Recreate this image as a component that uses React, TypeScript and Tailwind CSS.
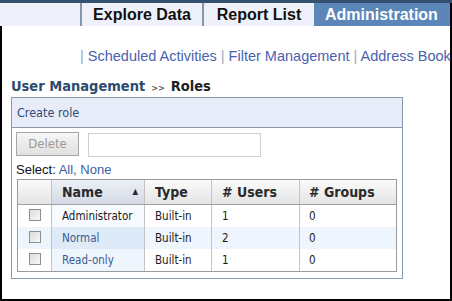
const tahoma = { fontFamily: '"DejaVu Sans Condensed", "DejaVu Sans", sans-serif' };

const rows = [
  { name: "Administrator", link: false, type: "Built-in", users: 1, groups: 0, bg: "bg-white", nameBg: "bg-[#f7fafe]" },
  { name: "Normal", link: true, type: "Built-in", users: 2, groups: 0, bg: "bg-[#eef5fd]", nameBg: "bg-[#dfeaf8]" },
  { name: "Read-only", link: true, type: "Built-in", users: 1, groups: 0, bg: "bg-white", nameBg: "bg-[#eff5fd]" },
];

function Checkbox() {
  return (
    <div className="w-[12px] h-[12px] border border-[#8f8f8f] bg-gradient-to-br from-[#dcdcdc] to-[#f8f8f8]" />
  );
}

export default function App() {
  return (
    <div className="w-[452px] h-[301px] bg-white overflow-hidden" style={{ fontFamily: '"Liberation Sans", Arial, sans-serif' }}>
      {/* top nav */}
      <div className="h-[3px] bg-[#34506f]" />
      <div className="flex h-[23px] bg-[#eef0fa] text-[16px] font-bold leading-[23px]">
        <div className="w-[82px] border-r-2 border-[#8596ad]" />
        <div className="w-[122px] text-center text-[#111] border-r-2 border-[#8596ad]">Explore Data</div>
        <div className="w-[110px] text-center text-[#111]">Report List</div>
        <div className="flex-1 bg-[#5b86b7] text-white pl-[11px] border-r-2 border-black">Administration</div>
      </div>

      <div className="h-[275px] border-x-2 border-b-2 border-black flex flex-col">
        {/* sub links */}
        <div className="mt-[20px] h-[20px] pl-[78px] whitespace-nowrap text-[14.5px] leading-[20px] text-[#4a62ad]">
          <span className="text-[#9aa6c6]">|</span> Scheduled Activities <span className="text-[#9aa6c6]">|</span> Filter Management{" "}
          <span className="text-[#9aa6c6]">|</span> Address Book
        </div>

        {/* title */}
        <div className="mt-[11px] h-[18px] pl-[9px] flex items-baseline font-bold leading-[18px]" style={tahoma}>
          <span className="text-[14.5px] text-[#2d4a70]">User Management</span>
          <span className="text-[9px] text-[#555] mx-[6px]">&gt;&gt;</span>
          <span className="text-[14.5px] text-[#1e1e1e]">Roles</span>
        </div>

        {/* panel */}
        <div className="mt-[2px] ml-[9px] w-[392px] h-[182px] border border-[#8a99ad] flex flex-col">
          <div className="h-[30px] bg-[#e8ecf8] border-b border-[#8a99ad] pl-[5px] text-[12.5px] leading-[29px] text-[#2e4c78]" style={tahoma}>
            Create role
          </div>

          <div className="flex items-start mt-[4px] ml-[4px] gap-[9px]">
            <div
              className="w-[63px] h-[24px] border border-[#a6a6a6] bg-gradient-to-b from-[#f6f6f6] to-[#e0e0e0] text-center text-[13px] leading-[22px] text-[#9a9a9a]"
              style={tahoma}
            >
              Delete
            </div>
            <div className="mt-[1px] w-[173px] h-[24px] border border-[#cfcfcf] bg-white" />
          </div>

          <div className="mt-[5px] ml-[4px] h-[16px] text-[13px] leading-[16px] text-[#111]">
            Select: <span className="text-[#3d5da3]">All, None</span>
          </div>

          {/* table */}
          <div className="mt-[1px] ml-[5px] w-[380px] border border-[#9a9a9a]" style={tahoma}>
            <div className="flex h-[25px] border-b border-[#a0a0a0] text-[14px] font-bold leading-[24px] text-[#2a2a2a]">
              <div className="w-[34px] bg-gradient-to-b from-[#fbfbfb] to-[#e4e4e4] border-r border-[#c4c4c4]" />
              <div className="w-[93px] pl-[10px] pr-[6px] flex justify-between bg-gradient-to-b from-[#edf0f6] to-[#d4dae6] border-r border-[#c4c4c4]">
                <span>Name</span>
                <span className="text-[8px]">▲</span>
              </div>
              <div className="w-[67px] pl-[10px] bg-gradient-to-b from-[#fbfbfb] to-[#e4e4e4] border-r border-[#c4c4c4]">Type</div>
              <div className="w-[88px] pl-[10px] bg-gradient-to-b from-[#fbfbfb] to-[#e4e4e4] border-r border-[#c4c4c4]">
                # Users
              </div>
              <div className="flex-1 pl-[9px] bg-gradient-to-b from-[#fbfbfb] to-[#e4e4e4]"># Groups</div>
            </div>
            {rows.map((r) => (
              <div key={r.name} className={`flex h-[22px] text-[11.5px] leading-[22px] text-[#1a1a1a] ${r.bg}`}>
                <div className="w-[34px] flex justify-center pt-[4px] border-r border-[#c4c4c4]">
                  <Checkbox />
                </div>
                <div className={`w-[93px] pl-[10px] border-r border-[#c4c4c4] ${r.nameBg} ${r.link ? "text-[#3a5b91]" : ""}`}>
                  {r.name}
                </div>
                <div className="w-[67px] pl-[10px] border-r border-[#c4c4c4]">{r.type}</div>
                <div className="w-[88px] pl-[10px] border-r border-[#c4c4c4]">{r.users}</div>
                <div className="flex-1 pl-[9px]">{r.groups}</div>
              </div>
            ))}
          </div>
        </div>
      </div>
    </div>
  );
}
